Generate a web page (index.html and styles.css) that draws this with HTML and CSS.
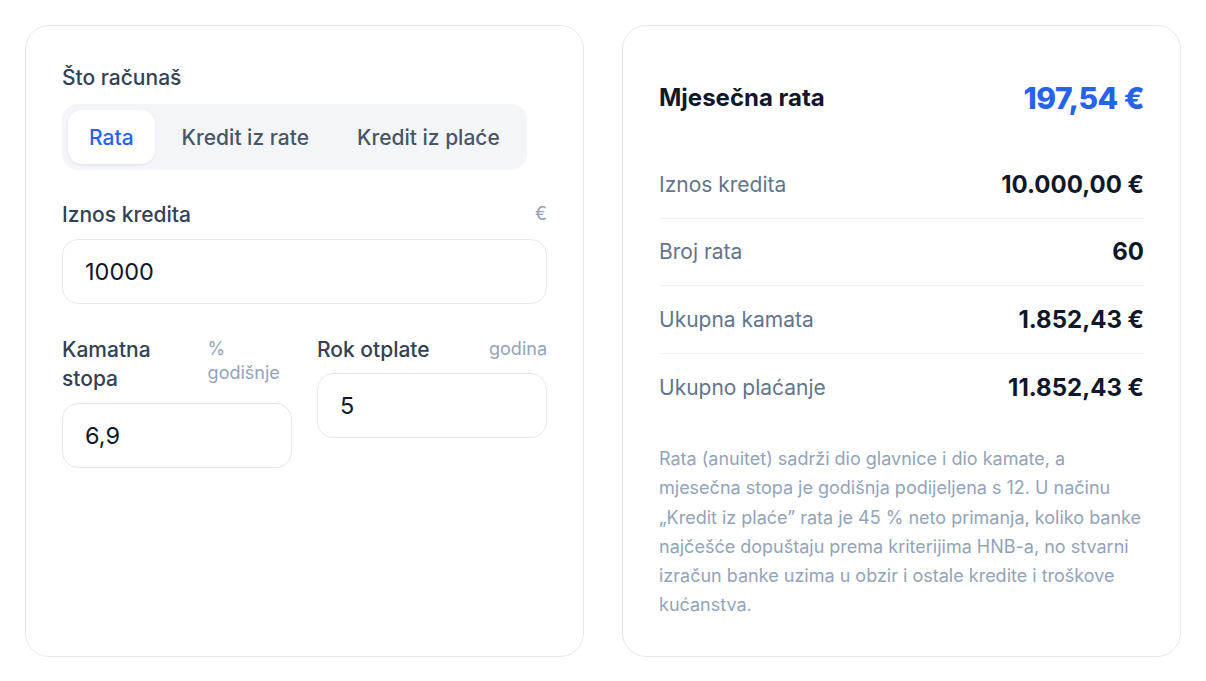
FILE: index.html
```html
<!DOCTYPE html>
<html lang="hr">
<head>
  <meta charset="UTF-8">
  <title>Kreditni kalkulator</title>
  <link rel="stylesheet" href="styles.css">
</head>
<body>

<main class="calc">
  <section class="card form-card">
    <div class="group-label">Što računaš</div>
    <div class="tabs">
      <button class="tab active">Rata</button>
      <button class="tab">Kredit iz rate</button>
      <button class="tab">Kredit iz plaće</button>
    </div>

    <div class="field">
      <div class="field-head">
        <label for="amount">Iznos kredita</label>
        <span class="unit">€</span>
      </div>
      <input type="text" id="amount" value="10000">
    </div>

    <div class="field-row">
      <div class="field">
        <div class="field-head">
          <label for="rate">Kamatna stopa</label>
          <span class="unit">% godišnje</span>
        </div>
        <input type="text" id="rate" value="6,9">
      </div>
      <div class="field">
        <div class="field-head">
          <label for="years">Rok otplate</label>
          <span class="unit">godina</span>
        </div>
        <input type="text" id="years" value="5">
      </div>
    </div>
  </section>

  <section class="card result-card">
    <div class="result-head">
      <h2>Mjesečna rata</h2>
      <span class="result-main">197,54 €</span>
    </div>

    <div class="result-rows">
      <div class="result-row">
        <span class="row-label">Iznos kredita</span>
        <span class="row-value">10.000,00 €</span>
      </div>
      <div class="result-row">
        <span class="row-label">Broj rata</span>
        <span class="row-value">60</span>
      </div>
      <div class="result-row">
        <span class="row-label">Ukupna kamata</span>
        <span class="row-value">1.852,43 €</span>
      </div>
      <div class="result-row">
        <span class="row-label">Ukupno plaćanje</span>
        <span class="row-value">11.852,43 €</span>
      </div>
    </div>

    <p class="note">Rata (anuitet) sadrži dio glavnice i dio kamate, a mjesečna stopa je godišnja podijeljena s 12. U načinu „Kredit iz plaće” rata je 45 % neto primanja, koliko banke najčešće dopuštaju prema kriterijima HNB-a, no stvarni izračun banke uzima u obzir i ostale kredite i troškove kućanstva.</p>
  </section>
</main>

</body>
</html>
```

FILE: styles.css
```css
body {
  margin: 0;
  background: #ffffff;
  font-family: Inter, "Noto Sans", sans-serif;
  color: #0f172a;
}

.calc {
  display: grid;
  grid-template-columns: 1fr 1fr;
  gap: 38px;
  padding: 25px;
}

.card {
  border: 1px solid #e5e7eb;
  border-radius: 24px;
  padding: 36px;
  background: #fff;
}

.group-label {
  font-size: 21px;
  font-weight: 500;
  line-height: 29px;
  color: #334155;
  margin: 1px 0 12px;
}

.tabs {
  display: inline-flex;
  gap: 6px;
  padding: 6px;
  background: #f3f5f8;
  border-radius: 16px;
  margin-bottom: 30px;
}

.tab {
  height: 54px;
  padding: 0 21px;
  border: none;
  border-radius: 14px;
  background: transparent;
  font-family: inherit;
  font-size: 21px;
  font-weight: 500;
  color: #475569;
  cursor: pointer;
}

.tab.active {
  background: #fff;
  color: #2563eb;
  box-shadow: 0 1px 3px rgba(15, 23, 42, 0.08);
}

.field {
  margin-bottom: 31px;
}

.field-head {
  display: flex;
  justify-content: space-between;
  align-items: flex-start;
  gap: 12px;
  margin-bottom: 9px;
}

.field-head label {
  font-size: 21px;
  font-weight: 500;
  line-height: 29.5px;
  color: #334155;
}

.unit {
  font-size: 18px;
  line-height: 24px;
  color: #94a3b8;
  padding-top: 2px;
}

.field input {
  box-sizing: border-box;
  width: 100%;
  height: 65px;
  padding: 0 22px;
  border: 1px solid #e2e8f0;
  border-radius: 16px;
  font-family: inherit;
  font-size: 23.5px;
  color: #0f172a;
  outline: none;
}

.field-row {
  display: grid;
  grid-template-columns: 1fr 1fr;
  gap: 25px;
}

.result-head {
  display: flex;
  justify-content: space-between;
  align-items: center;
  padding: 16px 0 33px;
}

.result-head h2 {
  margin: 0;
  font-size: 24px;
  font-weight: 700;
  line-height: 40px;
  color: #0f172a;
}

.result-main {
  font-size: 30px;
  font-weight: 800;
  line-height: 40px;
  letter-spacing: -0.5px;
  color: #2563eb;
}

.result-row {
  display: flex;
  justify-content: space-between;
  align-items: center;
  height: 67.5px;
  box-sizing: border-box;
  border-bottom: 1px solid #eef1f5;
}

.result-row:last-child {
  border-bottom: none;
}

.row-label {
  font-size: 21px;
  color: #64748b;
}

.row-value {
  font-size: 24px;
  font-weight: 700;
  color: #0f172a;
}

.note {
  margin: 23px 0 0;
  font-size: 18px;
  line-height: 29.3px;
  color: #94a3b8;
}
```
